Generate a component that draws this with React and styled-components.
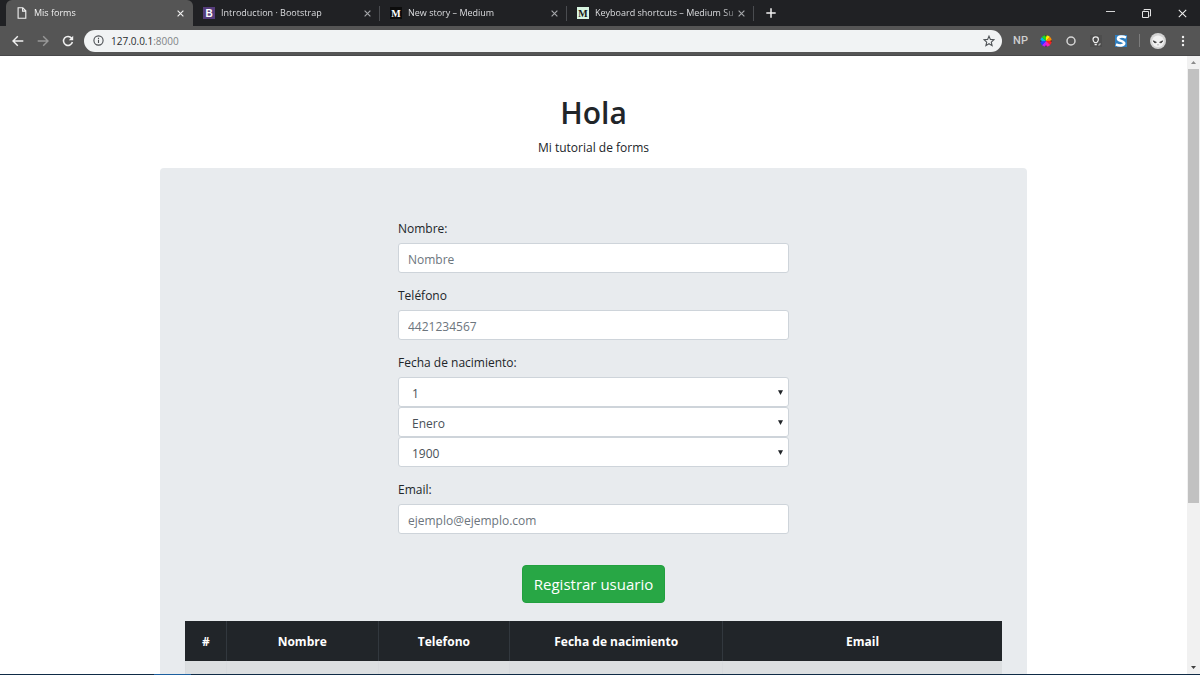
import React from "react";
import styled, { createGlobalStyle } from "styled-components";

const GlobalStyle = createGlobalStyle`
  *, *::before, *::after { box-sizing: border-box; }
  body { margin: 0; font-family: "Open Sans", "Noto Sans", sans-serif; font-size: 12px; color: #212529; background: #fff; }
  button, input, select { font: inherit; margin: 0; }
`;

const Window = styled.div`
  display: flex;
  flex-direction: column;
  height: 100vh;
  overflow: hidden;
`;

/* Browser chrome */
const TabStrip = styled.div`
  display: flex;
  align-items: stretch;
  height: 26px;
  flex: none;
  padding-left: 6px;
  background: #202124;
`;

const Tab = styled.div`
  display: flex;
  align-items: center;
  flex: 0 1 187px;
  min-width: 0;
  padding: 0 8px 0 10px;
  gap: 6px;
  font-size: 9px;
  color: ${(p) => (p.$active ? "#f1f1f1" : "#dcdde0")};
  background: ${(p) => (p.$active ? "#555555" : "transparent")};
  border-radius: 6px 6px 0 0;
`;

const TabTitle = styled.span`
  flex: 1;
  min-width: 0;
  margin-right: -6px;
  overflow: hidden;
  white-space: nowrap;
  line-height: 14px;
  mask-image: linear-gradient(to right, #000 90%, rgba(0, 0, 0, 0.2));
`;

const Separator = styled.span`
  flex: none;
  align-self: center;
  width: 1px;
  height: 15px;
  margin-left: -1px;
  background: #4a4c50;
`;

const IconButton = styled.button`
  display: flex;
  align-items: center;
  justify-content: center;
  flex: none;
  width: ${(p) => p.$w || 25}px;
  height: ${(p) => p.$h || 25}px;
  padding: 0;
  border: 0;
  background: none;
  color: ${(p) => p.$color || "#f1f1f1"};
`;

const Favicon = styled.span`
  display: flex;
  align-items: center;
  justify-content: center;
  flex: none;
  width: 12px;
  height: 12px;
  font: ${(p) => p.$font};
  color: ${(p) => p.$fg};
  background: ${(p) => p.$bg};
`;

const WindowControls = styled.div`
  display: flex;
  align-items: center;
  margin-left: auto;
`;

const Toolbar = styled.div`
  display: flex;
  align-items: center;
  flex: none;
  height: 30px;
  padding: 0 5px;
  background: #555555;
  border-bottom: 1px solid #48484a;
`;

const AddressBar = styled.div`
  display: flex;
  align-items: center;
  flex: 1;
  min-width: 0;
  height: 22px;
  margin: 0 6px 0 4px;
  padding: 0 1px 0 9px;
  border-radius: 11px;
  background: #f1f3f4;
  font-size: 10px;
`;

const Url = styled.span`
  flex: 1;
  padding-left: 7px;
  line-height: 16px;
  color: #2a2c2f;
`;

const Port = styled.span`
  color: #7f8386;
`;

const ToolbarDivider = styled.span`
  width: 1px;
  height: 13px;
  margin: 0 5px 0 6px;
  background: #7c7c7c;
`;

const ExtensionText = styled.span`
  font: 500 11px "Roboto", sans-serif;
  color: #cfcfcf;
`;

/* Page */
const Viewport = styled.div`
  display: flex;
  flex: 1;
  min-height: 0;
`;

const Page = styled.main`
  flex: 1;
  min-width: 0;
  overflow: hidden;
  padding: 38px 160px 0;
`;

const Heading = styled.h1`
  margin: 0 0 6px;
  font-size: 30px;
  line-height: 38px;
  font-weight: 600;
  text-align: center;
`;

const Lead = styled.p`
  margin: 0 0 10px;
  line-height: 20px;
  text-align: center;
`;

const Panel = styled.section`
  padding: 50px 25px;
  border-radius: 4px;
  background: #e8ebee;
`;

const Form = styled.form`
  display: flex;
  flex-direction: column;
  align-items: stretch;
  width: 391px;
  max-width: 100%;
  margin: 0 auto 18px;
`;

const Field = styled.div`
  margin-bottom: 12px;
`;

const Label = styled.label`
  display: block;
  margin-bottom: 4px;
  line-height: 21px;
`;

const Input = styled.input`
  display: block;
  width: 100%;
  height: 30px;
  padding: 2px 9px 0;
  border: 1px solid #ced4da;
  border-radius: 3px;
  background: #fff;
  color: #495057;
  &::placeholder { color: #6c757d; opacity: 1; }
`;

const SelectWrap = styled.div`
  position: relative;
`;

const Select = styled.select`
  appearance: none;
  display: block;
  width: 100%;
  height: 30px;
  padding: 2px 24px 0 13px;
  border: 1px solid #ced4da;
  border-radius: 3px;
  background: #fff;
  color: #495057;
`;

const Arrow = styled.svg`
  position: absolute;
  right: 6px;
  top: 13px;
  pointer-events: none;
`;

const Submit = styled.button`
  align-self: center;
  height: 38px;
  margin-top: 19px;
  padding: 0 11px;
  border: 1px solid #22a03f;
  border-radius: 4px;
  background: #28a745;
  color: #fff;
  font-size: 15px;
`;

const Table = styled.table`
  width: 100%;
  table-layout: fixed;
  border-collapse: collapse;
`;

const Th = styled.th`
  width: ${(p) => p.$w};
  height: 40px;
  padding: 0;
  border-left: 1px solid ${(p) => (p.$first ? "#212529" : "#32383e")};
  background: #212529;
  color: #fff;
  font-size: 12px;
  font-weight: 700;
  text-align: center;
`;

const Td = styled.td`
  height: 40px;
  border-left: 1px solid #d8dbde;
  background: #dcdfe1;
`;

const Scrollbar = styled.div`
  display: flex;
  flex-direction: column;
  flex: none;
  width: 13px;
  background: #f1f1f1;
`;

const Thumb = styled.div`
  flex: 0 1 434px;
  margin: 0 1px;
  background: #c1c1c1;
`;

const Spacer = styled.div`
  flex: 1;
`;

const Taskbar = styled.div`
  flex: none;
  height: 1px;
  background: linear-gradient(to right, #0f2b46 154px, #1c5f9f 154px 191px, #0f2b46 191px);
`;

const CloseIcon = ({ size = 7, width = 1.3 }) => (
  <svg width={size} height={size} viewBox="0 0 8 8" fill="none" stroke="currentColor" strokeWidth={width}>
    <path d="M.7.7l6.6 6.6M7.3.7L.7 7.3" />
  </svg>
);

const FileIcon = () => (
  <svg width="12" height="12" viewBox="0 0 12 12" fill="none" stroke="#f1f1f1" strokeWidth="1.1">
    <path d="M2.1.8h4.7l3 3v7.4H2.1zM6.6.8v3.3h3.2" />
  </svg>
);

const tabs = [
  { title: "Mis forms", active: true, icon: <FileIcon /> },
  { title: "Introduction · Bootstrap", icon: <Favicon $bg="#563d7c" $fg="#fff" $font='700 10px "Liberation Sans", sans-serif'>B</Favicon> },
  { title: "New story – Medium", icon: <Favicon $bg="#0c0c0c" $fg="#fff" $font='700 10px "Liberation Serif", serif'>M</Favicon> },
  { title: "Keyboard shortcuts – Medium Su", icon: <Favicon $bg="#d9f6e2" $fg="#161b18" $font='700 10px "Liberation Serif", serif'>M</Favicon> },
];

const wheel = ["#ffe600", "#ff8a00", "#ff2020", "#ff20b0", "#c020ff", "#2040ff", "#00b8e8", "#20d820"];

const ColorWheel = () => (
  <svg width="12" height="12" viewBox="-6 -6 12 12">
    {wheel.map((c, i) => (
      <path key={c} d="M0 0L-2.300-5.300A5.800 5.800 0 0 1 2.300-5.300Z" fill={c} transform={`rotate(${i * 45 + 22})`} />
    ))}
    <path d="M0-6v1.500M0 4.500v1.500M-6 0h1.500M4.500 0h1.500" stroke="#222" strokeWidth="1" />
  </svg>
);

const columns = [
  ["#", "5%"],
  ["Nombre", "18.6%"],
  ["Telefono", "16.1%"],
  ["Fecha de nacimiento", "26.1%"],
  ["Email", "34.2%"],
];

const months = ["Enero", "Febrero", "Marzo", "Abril", "Mayo", "Junio", "Julio", "Agosto", "Septiembre", "Octubre", "Noviembre", "Diciembre"];
const days = Array.from({ length: 31 }, (_, i) => i + 1);
const years = Array.from({ length: 120 }, (_, i) => 1900 + i);

function DateSelect({ id, label, options }) {
  return (
    <SelectWrap>
      <Select id={id} aria-label={label} defaultValue={options[0]}>
        {options.map((o) => (
          <option key={o}>{o}</option>
        ))}
      </Select>
      <Arrow width="5" height="5" viewBox="0 0 5 5">
        <path d="M0 .3h5L2.5 5z" fill="#212529" />
      </Arrow>
    </SelectWrap>
  );
}

export default function App() {
  return (
    <Window>
      <GlobalStyle />
      <TabStrip>
        {tabs.map((t) => (
          <React.Fragment key={t.title}>
            <Tab $active={t.active}>
              {t.icon}
              <TabTitle>{t.title}</TabTitle>
              <IconButton $w={9} $h={14} $color={t.active ? "#f1f1f1" : "#a5a7aa"} aria-label="Cerrar pestaña">
                <CloseIcon />
              </IconButton>
            </Tab>
            {!t.active && <Separator />}
          </React.Fragment>
        ))}
        <IconButton $w={34} $h={26} aria-label="Nueva pestaña">
          <svg width="10" height="10" viewBox="0 0 10 10" stroke="currentColor" strokeWidth="1.5">
            <path d="M5 .3v9.4M.3 5h9.4" />
          </svg>
        </IconButton>
        <WindowControls>
          <IconButton $w={36} aria-label="Minimizar">
            <svg width="9" height="9" viewBox="0 0 9 9"><path d="M0 2.500h9" stroke="#d5d5d6" strokeWidth="1" /></svg>
          </IconButton>
          <IconButton $w={36} aria-label="Restaurar">
            <svg width="9" height="9" viewBox="0 0 9 9" fill="none" stroke="#e2e2e3" strokeWidth="1">
              <path d="M.5 2.500h6v6h-6zM2 1.500V.500h6.500v6.500H7.500" />
            </svg>
          </IconButton>
          <IconButton $w={36} aria-label="Cerrar"><CloseIcon size={9} width={0.9} /></IconButton>
        </WindowControls>
      </TabStrip>

      <Toolbar>
        <IconButton aria-label="Atrás">
          <svg width="12" height="12" viewBox="0 0 12 12" fill="none" stroke="currentColor" strokeWidth="1.4">
            <path d="M11.3 6H1.2M5.8 1.2L1 6l4.8 4.8" />
          </svg>
        </IconButton>
        <IconButton $color="#989898" aria-label="Adelante">
          <svg width="12" height="12" viewBox="0 0 12 12" fill="none" stroke="currentColor" strokeWidth="1.4">
            <path d="M.7 6h10.1M6.2 1.2L11 6l-4.8 4.8" />
          </svg>
        </IconButton>
        <IconButton aria-label="Recargar">
          <svg width="12" height="12" viewBox="0 0 12 12" fill="none" stroke="currentColor" strokeWidth="1.5">
            <path d="M9.6 3.2A4.5 4.5 0 1 0 10.4 7" />
            <path d="M11.2.8v4.4H6.8z" fill="currentColor" stroke="none" />
          </svg>
        </IconButton>
        <AddressBar>
          <svg width="11" height="11" viewBox="0 0 11 11" fill="none" stroke="#4b4e52" strokeWidth="1.1">
            <circle cx="5.5" cy="5.5" r="4.6" />
            <path d="M5.5 4.8v3.3M5.5 2.7v1.2" />
          </svg>
          <Url>127.0.0.1<Port>:8000</Port></Url>
          <IconButton $h={22} $color="#4f5357" aria-label="Marcador">
            <svg width="12" height="12" viewBox="0 0 12 12" fill="none" stroke="currentColor" strokeWidth="1.1">
              <path d="M6 1.100l1.400 3.300 3.600.3-2.700 2.400.8 3.500L6 8.700l-3.100 1.900.8-3.500L1 4.700l3.600-.3z" />
            </svg>
          </IconButton>
        </AddressBar>
        <IconButton aria-label="NP"><ExtensionText>NP</ExtensionText></IconButton>
        <IconButton aria-label="Color"><ColorWheel /></IconButton>
        <IconButton aria-label="Extensión">
          <svg width="10" height="10" viewBox="0 0 10 10" fill="none"><circle cx="5" cy="5" r="4" stroke="#d6d6d6" strokeWidth="1.5" /></svg>
        </IconButton>
        <IconButton aria-label="Sugerencias">
          <svg width="12" height="12" viewBox="0 0 12 12" fill="none" stroke="#eeeeee" strokeWidth="1.2">
            <rect width="12" height="12" fill="#4d4d4d" stroke="none" />
            <path d="M4.600 7.600C3.400 6.600 3 5.900 3 4.600a2.700 2.700 0 0 1 5.400 0c0 1.300-.4 2-1.600 3zM4.600 9.700h2.200" />
            <path d="M8.500 10.500l2-2" stroke="#aaa" />
          </svg>
        </IconButton>
        <IconButton aria-label="S">
          <svg width="12" height="12" viewBox="0 0 12 12">
            <rect width="12" height="12" fill="#2f7fc1" />
            <path d="M11 2.600C8 1 3 1.200 3 3.700 3 6 9.200 5.800 9.200 8.300 9.200 10.800 4 11 1 9.400" fill="none" stroke="#fff" strokeWidth="2.600" />
          </svg>
        </IconButton>
        <ToolbarDivider />
        <IconButton aria-label="Perfil">
          <svg width="16" height="16" viewBox="0 0 16 16">
            <circle cx="8" cy="8" r="8" fill="#d4d4d4" />
            <ellipse cx="8" cy="8.300" rx="6" ry="5.800" fill="#f1f1f1" />
            <path d="M3.300 7.700l3.200 1.600c-1.300 1-2.900.3-3.200-1.600zM12.700 7.700L9.500 9.300c1.300 1 2.900.3 3.200-1.600z" fill="#222" stroke="#222" strokeWidth=".5" />
            <path d="M7 11.800h2" stroke="#aaa" strokeWidth=".8" />
          </svg>
        </IconButton>
        <IconButton aria-label="Menú">
          <svg width="4" height="12" viewBox="0 0 4 12" fill="currentColor">
            <circle cx="2" cy="2" r="1.200" /><circle cx="2" cy="6" r="1.200" /><circle cx="2" cy="10" r="1.200" />
          </svg>
        </IconButton>
      </Toolbar>

      <Viewport>
        <Page>
          <Heading>Hola</Heading>
          <Lead>Mi tutorial de forms</Lead>
          <Panel>
            <Form onSubmit={(e) => e.preventDefault()}>
              <Field>
                <Label htmlFor="nombre">Nombre:</Label>
                <Input id="nombre" placeholder="Nombre" />
              </Field>
              <Field>
                <Label htmlFor="telefono">Teléfono</Label>
                <Input id="telefono" placeholder="4421234567" />
              </Field>
              <Field>
                <Label htmlFor="dia">Fecha de nacimiento:</Label>
                <DateSelect id="dia" label="Día" options={days} />
                <DateSelect id="mes" label="Mes" options={months} />
                <DateSelect id="anio" label="Año" options={years} />
              </Field>
              <Field>
                <Label htmlFor="email">Email:</Label>
                <Input id="email" type="email" placeholder="ejemplo@ejemplo.com" />
              </Field>
              <Submit type="submit">Registrar usuario</Submit>
            </Form>
            <Table>
              <thead>
                <tr>
                  {columns.map(([name, w], i) => (
                    <Th key={name} $w={w} $first={i === 0} scope="col">{name}</Th>
                  ))}
                </tr>
              </thead>
              <tbody>
                <tr>
                  {columns.map(([name]) => <Td key={name} />)}
                </tr>
              </tbody>
            </Table>
          </Panel>
        </Page>
        <Scrollbar>
          <IconButton $w={13} $h={13} $color="#8a8a8a" aria-label="Subir">
            <svg width="5" height="3" viewBox="0 0 5 3"><path d="M0 3h5L2.500 0z" fill="currentColor" /></svg>
          </IconButton>
          <Thumb />
          <Spacer />
          <IconButton $w={13} $h={13} $color="#404040" aria-label="Bajar">
            <svg width="5" height="3" viewBox="0 0 5 3"><path d="M0 0h5L2.500 3z" fill="currentColor" /></svg>
          </IconButton>
        </Scrollbar>
      </Viewport>
      <Taskbar />
    </Window>
  );
}
